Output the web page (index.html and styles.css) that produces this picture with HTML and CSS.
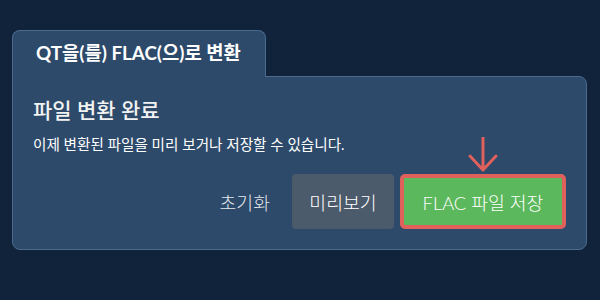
FILE: index.html
```html
<!DOCTYPE html>
<html lang="ko">
<head>
    <meta charset="UTF-8">
    <title>QT을(를) FLAC(으)로 변환</title>
    <link rel="stylesheet" href="styles.css">
</head>
<body>
    <div class="dialog">
        <div class="tab">QT을(를) FLAC(으)로 변환</div>
        <div class="panel">
            <h2 class="title">파일 변환 완료</h2>
            <p class="desc">이제 변환된 파일을 미리 보거나 저장할 수 있습니다.</p>
            <div class="actions">
                <button class="btn btn--reset">초기화</button>
                <button class="btn btn--preview">미리보기</button>
                <button class="btn btn--save">
                    FLAC 파일 저장
                    <svg class="arrow" width="32" height="36" viewBox="0 0 32 36">
                        <path d="M16 1 V33 M3 19 L16 33 L29 19" fill="none" stroke="#e0605c" stroke-width="3" stroke-linecap="round" stroke-linejoin="round"/>
                    </svg>
                </button>
            </div>
        </div>
    </div>
</body>
</html>
```

FILE: styles.css
```css
body {
    margin: 0;
    height: 300px;
    background-color: #11233a;
    font-family: Lato, "Noto Sans CJK KR", sans-serif;
    color: #fff;
}

.dialog {
    padding: 30px 13px 0 12px;
}

.tab {
    display: inline-block;
    position: relative;
    z-index: 1;
    margin-bottom: -1px;
    padding: 0 23px;
    width: 206px;
    height: 46px;
    line-height: 44px;
    font-size: 18.8px;
    font-weight: bold;
    white-space: nowrap;
    background-color: #2d4a6b;
    border: 1px solid #4a6a8e;
    border-bottom: none;
    border-radius: 8px 8px 0 0;
}

.panel {
    background-color: #2d4a6b;
    border: 1px solid #4a6a8e;
    border-radius: 0 8px 8px 8px;
    padding: 19px 20px 20px 20px;
    height: 133px;
}

.title {
    margin: 0;
    font-size: 21px;
    font-weight: 500;
    color: #f2f2f2;
    line-height: 28px;
}

.desc {
    margin: 11px 0 0 0;
    font-size: 14.6px;
    line-height: 20px;
}

.actions {
    display: flex;
    justify-content: flex-end;
    align-items: center;
    gap: 6px;
    margin-top: 19px;
}

.btn {
    font-family: inherit;
    font-size: 18.3px;
    font-weight: 300;
    height: 55px;
    border: none;
    border-radius: 4px;
    color: #fff;
    padding: 0 16px;
    white-space: nowrap;
}

.btn--reset {
    background: transparent;
    color: #e4e8ee;
}

.btn--preview {
    background-color: #4c5b6c;
    width: 102px;
}

.btn--save {
    position: relative;
    width: 166px;
    background-color: #5cb85c;
    border: 4px solid #e0605c;
    border-radius: 5px;
}

.arrow {
    position: absolute;
    left: 50%;
    top: -41px;
    transform: translateX(-50%);
}
```
